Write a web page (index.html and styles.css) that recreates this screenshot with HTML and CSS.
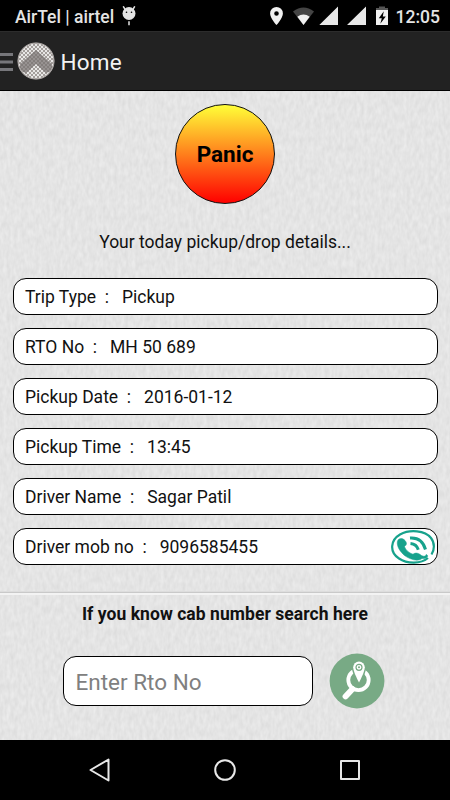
FILE: index.html
```html
<!DOCTYPE html>
<html lang="en">
<head>
<meta charset="utf-8">
<title>Home</title>
<link rel="stylesheet" href="styles.css">
</head>
<body>
<div class="screen">
  <div class="status">
    <span class="carrier">AirTel | airtel</span>
    <svg class="droid" width="14" height="20" viewBox="0 0 14 20"><g fill="#e4e4e4"><circle cx="7" cy="7.500" r="6.500"/><path d="M1.200 0.300l2.500 4M12.800 0.300l-2.500 4M7 15.300v4" stroke="#e4e4e4" stroke-width="1.500"/></g><circle cx="4.500" cy="6.300" r=".8"/><circle cx="9.500" cy="6.300" r=".8"/></svg>
    <svg class="tray" width="120" height="20" viewBox="0 0 120 20">
      <path d="M7.500 1a6.400 6.400 0 0 0-6.400 6.400C1.100 12 7.500 19 7.500 19s6.400-7 6.400-11.600A6.400 6.400 0 0 0 7.500 1zm0 4.200a2.300 2.300 0 1 1 0 4.600 2.300 2.300 0 0 1 0-4.600z" fill="#f0f0f0" fill-rule="evenodd"/>
      <path d="M24 5.400Q34.500-2.600 45 5.400L34.500 19z" fill="#444"/>
      <path d="M28.300 10.800Q34.500 6.400 40.700 10.800L34.500 19z" fill="#f0f0f0"/>
      <path d="M50.300 19L69 .5V19zM78 19L97 .5V19z" fill="#e8e8e8"/>
      <path d="M107 4V2h3V.5h6V2h3v2z" fill="#555"/><path d="M107 4h12v15h-12z" fill="#f0f0f0"/><path d="M114.800 5.200l-5 7h3l-1.500 5.500 5.500-7.200h-3z" fill="#000"/>
    </svg>
    <span class="clock">12:05</span>
  </div>
  <header class="bar">
    <svg class="burger" width="13" height="20" viewBox="0 0 13 20"><path d="M0 2.500h13M0 10h13M0 17.500h13" stroke="#77777b" stroke-width="3"/></svg>
    <svg class="logo" width="38" height="38" viewBox="0 0 38 38">
      <defs>
        <pattern id="dots" width="4" height="4" patternUnits="userSpaceOnUse"><circle cx="1" cy="1" r="1" fill="#fff"/><circle cx="3" cy="3" r="1" fill="#fff"/></pattern>
        <clipPath id="disc"><circle cx="19" cy="19" r="17.500"/></clipPath>
      </defs>
      <circle cx="19" cy="19" r="18.300" fill="#a39e9b"/>
      <g clip-path="url(#disc)">
        <rect width="38" height="38" fill="url(#dots)"/>
        <path d="M19 8L35 22v7L29 31 19 22 9 31 3 29v-7z" fill="#777270" opacity=".72"/>
      </g>
      <circle cx="19" cy="19" r="18" fill="none" stroke="#aaa5a3"/>
    </svg>
    <h1>Home</h1>
  </header>
  <main>
    <svg class="paper" width="450" height="649" aria-hidden="true">
      <filter id="grain" x="0" y="0" width="100%" height="100%" color-interpolation-filters="sRGB"><feTurbulence type="fractalNoise" baseFrequency=".28 .13" numOctaves="2" seed="4"/><feColorMatrix values=".08 0 0 0 .855 .08 0 0 0 .855 .08 0 0 0 .855 0 0 0 0 1"/></filter>
      <rect width="450" height="649" filter="url(#grain)"/>
    </svg>
    <button class="panic">Panic</button>
    <p class="intro">Your today pickup/drop details...</p>
    <div class="rows">
      <div class="row">Trip Type  :   Pickup</div>
      <div class="row">RTO No  :   MH 50 689</div>
      <div class="row">Pickup Date  :   2016-01-12</div>
      <div class="row">Pickup Time  :   13:45</div>
      <div class="row">Driver Name  :   Sagar Patil</div>
      <div class="row"><span>Driver mob no  :   9096585455</span><svg class="call" width="46" height="34" viewBox="0 0 46 34">
          <path d="M38 28C31 34 17 34 9 28.500C-1 22 .5 10 10 4.500C20-1 35 .5 41 8C45 13 44.500 20 41.500 24.500" fill="none" stroke="#17a28c" stroke-width="2.200"/>
          <path d="M7.300 12C7.800 8 12.500 7.500 15 10.500C17.500 13.500 16.500 15 14.500 16.500C15.500 20 19 23 23 24.200C26 22 29 23.500 31.500 25.500C34 27.200 37 25.500 36 24.500C39 25 38 29 32 28.500C28 32 20 29.500 14.500 25.500C10 21.500 6.800 16.500 7.300 12z" fill="#17a28c" stroke="#17a28c" stroke-width=".5"/>
          <path d="M20.500 13.500q6 .5 7.800 6.200M20 8q12-1 15.500 11.500" fill="none" stroke="#17a28c" stroke-width="3"/>
        </svg></div>
    </div>
    <div class="divider"></div>
    <h2>If you know cab number search here</h2>
    <div class="search">
      <input type="text" placeholder="Enter Rto No">
      <svg width="56" height="56" viewBox="0 0 56 56">
        <circle cx="28" cy="28" r="27.400" fill="#78aa85"/>
        <path d="M23.500 36L16.500 43.500" stroke="#fff" stroke-width="5.800" stroke-linecap="round"/>
        <circle cx="29.500" cy="27" r="10.200" fill="none" stroke="#fff" stroke-width="3.800"/>
        <path d="M30 8.500a5.800 5.800 0 0 0-5.800 5.800C24.200 19 30 29.500 30 29.500S35.800 19 35.800 14.300a5.800 5.800 0 0 0-5.800-5.800z" fill="#fff" stroke="#78aa85" stroke-width="2.800" paint-order="stroke"/>
        <circle cx="30" cy="14.300" r="3" fill="none" stroke="#78aa85" stroke-width="1.200"/><circle cx="30" cy="14.300" r="1" fill="#78aa85"/>
      </svg>
    </div>
  </main>
  <nav>
    <svg width="24" height="26" viewBox="0 0 24 26"><path d="M20.500 2.500v21L2.500 13z"/></svg>
    <svg width="24" height="26" viewBox="0 0 24 26"><circle cx="12" cy="13" r="9.800"/></svg>
    <svg width="24" height="26" viewBox="0 0 24 26"><rect x="3" y="4" width="18" height="18"/></svg>
  </nav>
</div>
</body>
</html>
```
FILE: styles.css
```css
* { box-sizing: border-box; }
body { margin: 0; font-family: Roboto, sans-serif; color: #111; }
.screen { width: 450px; height: 800px; display: flex; flex-direction: column; overflow: hidden; background: #000; }
.status { height: 31px; flex: none; display: flex; align-items: center; padding: 2px 10px 0 15px; color: #e4e4e4; font-size: 17.5px; font-weight: 500; }
.droid { margin: -2px 0 0 8px; }
.tray { margin: -2px 0 0 auto; }
.clock { margin-left: 7px; }
.bar { height: 60px; flex: none; display: flex; align-items: center; background: #222; border-top: 1px solid #2c2c2c; border-bottom: 1px solid #000; }
.burger { margin-top: 2px; }
.logo { margin-left: 3.5px; }
h1 { margin: 2px 0 0 6px; font-size: 22.5px; font-weight: 400; letter-spacing: .2px; color: #f3f3f3; }
main { position: relative; height: 649px; flex: none; display: flex; flex-direction: column; align-items: center; background: #e3e3e3; isolation: isolate; }
.paper { position: absolute; inset: 0; z-index: -1; }
.panic { width: 100px; height: 100px; flex: none; margin-top: 13px; padding: 0; border: 1px solid #111; border-radius: 50%; background: linear-gradient(#ffff38, #ff0000); font: bold 22.5px Roboto, sans-serif; color: #000; }
.intro { margin: 27px 0 0; font-size: 17.5px; line-height: 22px; }
.rows { width: 425px; margin-top: 25px; display: flex; flex-direction: column; gap: 13px; }
.row { height: 37px; display: flex; align-items: center; padding: 0 1px 0 11.5px; border: 1px solid #000; border-radius: 13px; background: #fff; font-size: 17.5px; white-space: pre; }
.call { margin: 0 0 0 auto; }
.divider { width: 100%; height: 4px; margin-top: 26px; background: #c9c9c9; border-top: 1px solid #ddd; border-bottom: 2px solid #f3f3f3; }
h2 { margin: 8px 0 0; font-size: 17.5px; line-height: 22px; font-weight: 700; letter-spacing: .05px; }
.search { width: 322px; margin: 28px 3px 0 0; display: flex; align-items: center; justify-content: space-between; }
input { width: 250px; height: 50px; padding: 2px 12px 0; border: 1px solid #000; border-radius: 13px; background: #fff; font: 22.5px Roboto, sans-serif; }
input::placeholder { color: #808080; opacity: 1; }
nav { flex: 1; display: flex; align-items: center; justify-content: space-between; padding: 0 88px; }
nav svg { fill: none; stroke: #e8e8e8; stroke-width: 2; stroke-linejoin: round; }
```
